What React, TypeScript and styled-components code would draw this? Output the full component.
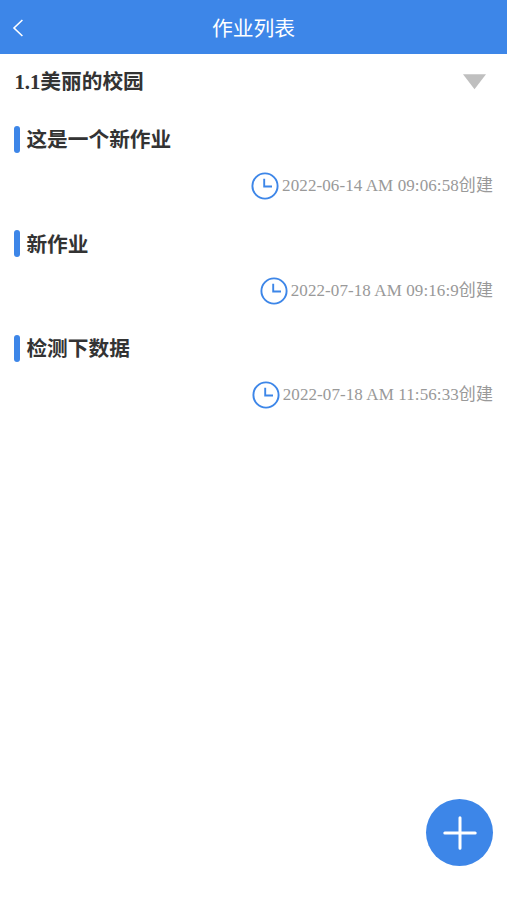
import React from "react";
import styled, { createGlobalStyle } from "styled-components";

const GlobalStyle = createGlobalStyle`
  * { box-sizing: border-box; }
  body { margin: 0; background: #fff; }
`;

const Page = styled.div`
  position: relative;
  display: flex;
  flex-direction: column;
  height: 900px;
  background: #fff;
  font-family: "Liberation Serif", "Noto Sans CJK SC", serif;
`;

const Header = styled.header`
  display: grid;
  grid-template-columns: 40px 1fr 40px;
  align-items: center;
  height: 54.4px;
  flex: none;
  background: #3d86e8;
  color: #fff;
`;

const BackButton = styled.button`
  display: flex;
  padding: 1px 0 0 12px;
  border: 0;
  background: none;
  color: inherit;
`;

const Title = styled.h1`
  margin: 0;
  padding-top: 3px;
  text-align: center;
  font-size: 20.8px;
  line-height: 30px;
  font-weight: 400;
`;

const Chapter = styled.div`
  display: flex;
  align-items: center;
  justify-content: space-between;
  height: 55.6px;
  padding: 0 20px 0 14.5px;
  font-size: 20.7px;
  line-height: 30px;
  font-weight: 700;
  color: #333;
`;

const List = styled.ul`
  margin: 0;
  padding: 0.4px 0 0;
  list-style: none;
`;

const Item = styled.li`
  display: flex;
  flex-direction: column;
  height: 104.4px;
  padding: 14px 14px 0;
`;

const ItemTitle = styled.div`
  display: flex;
  align-items: center;
  gap: 6.4px;
  height: 30px;
  font-size: 20.7px;
  line-height: 30px;
  font-weight: 700;
  color: #333;
`;

const ItemName = styled.span`
  padding-top: 2px;
`;

const Marker = styled.span`
  width: 6px;
  height: 27px;
  border-radius: 3px;
  background: #3d86e8;
`;

const Created = styled.div`
  display: flex;
  align-items: center;
  justify-content: flex-end;
  gap: 2.8px;
  height: 30px;
  margin-top: 17px;
  font-size: 17px;
  line-height: 26px;
  letter-spacing: 0.09px;
  color: #999;
`;

const AddButton = styled.button`
  position: absolute;
  right: 14px;
  bottom: 34px;
  display: flex;
  align-items: center;
  justify-content: center;
  width: 67px;
  height: 67px;
  padding: 0;
  border: 0;
  border-radius: 50%;
  background: #3d86e8;
`;

const Clock = () => (
  <svg width="28" height="28" viewBox="0 0 28 28" fill="none" stroke="#3d86e8" strokeWidth="1.9">
    <circle cx="14" cy="14" r="12.6" />
    <path d="M13.2 6.7v7.8h7.8" />
  </svg>
);

const works = [
  { title: "这是一个新作业", created: "2022-06-14 AM 09:06:58创建" },
  { title: "新作业", created: "2022-07-18 AM 09:16:9创建" },
  { title: "检测下数据", created: "2022-07-18 AM 11:56:33创建" },
];

export default function App() {
  return (
    <Page>
      <GlobalStyle />
      <Header>
        <BackButton aria-label="返回">
          <svg width="12" height="18" viewBox="0 0 12 18" fill="none" stroke="currentColor" strokeWidth="1.6">
            <path d="M10.4 1L2 9l8.4 8" />
          </svg>
        </BackButton>
        <Title>作业列表</Title>
      </Header>
      <Chapter>
        <span>1.1美丽的校园</span>
        <svg width="25" height="16" viewBox="0 0 25 16" fill="#bfbfbf">
          <path d="M1 .3h23L12.5 15.3z" />
        </svg>
      </Chapter>
      <List>
        {works.map((work) => (
          <Item key={work.title}>
            <ItemTitle>
              <Marker />
              <ItemName>{work.title}</ItemName>
            </ItemTitle>
            <Created>
              <Clock />
              {work.created}
            </Created>
          </Item>
        ))}
      </List>
      <AddButton aria-label="添加">
        <svg width="34" height="34" viewBox="0 0 34 34" fill="none" stroke="#fff" strokeWidth="3" strokeLinecap="round">
          <path d="M17 1.8v30.4M1.8 17h30.4" />
        </svg>
      </AddButton>
    </Page>
  );
}
